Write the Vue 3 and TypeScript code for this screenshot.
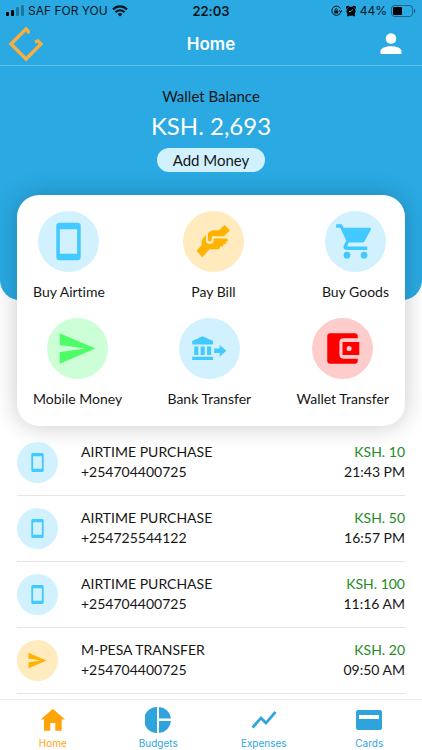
<script setup lang="ts">
type IconName = 'phone' | 'hands' | 'cart' | 'send' | 'bank' | 'wallet'
type Tone = 'blue' | 'amber' | 'green' | 'red'

interface Action {
  label: string
  icon: IconName
  tone: Tone
}

interface Transaction {
  id: number
  title: string
  phone: string
  amount: string
  time: string
  icon: IconName
  tone: Tone
}

interface Tab {
  label: string
  path: string
  active?: boolean
}

const actionRows: Action[][] = [
  [
    { label: 'Buy Airtime', icon: 'phone', tone: 'blue' },
    { label: 'Pay Bill', icon: 'hands', tone: 'amber' },
    { label: 'Buy Goods', icon: 'cart', tone: 'blue' },
  ],
  [
    { label: 'Mobile Money', icon: 'send', tone: 'green' },
    { label: 'Bank Transfer', icon: 'bank', tone: 'blue' },
    { label: 'Wallet Transfer', icon: 'wallet', tone: 'red' },
  ],
]

const transactions: Transaction[] = [
  { id: 1, title: 'AIRTIME PURCHASE', phone: '+254704400725', amount: 'KSH. 10', time: '21:43 PM', icon: 'phone', tone: 'blue' },
  { id: 2, title: 'AIRTIME PURCHASE', phone: '+254725544122', amount: 'KSH. 50', time: '16:57 PM', icon: 'phone', tone: 'blue' },
  { id: 3, title: 'AIRTIME PURCHASE', phone: '+254704400725', amount: 'KSH. 100', time: '11:16 AM', icon: 'phone', tone: 'blue' },
  { id: 4, title: 'M-PESA TRANSFER', phone: '+254704400725', amount: 'KSH. 20', time: '09:50 AM', icon: 'send', tone: 'amber' },
]

/* Glyphs share a 60 x 60 box centred in their disc. */
const glyphs: Record<IconName, string> = {
  phone:
    'M21 11.500H39A3 3 0 0 1 42 14.500V45.500A3 3 0 0 1 39 48.500H21A3 3 0 0 1 18 45.500V14.500A3 3 0 0 1 21 11.500ZM21.500 18V42H38.500V18Z',
  hands:
    'M24.500 22L28.500 19H35.500L41 13.800L46.200 19.300L40.300 24.800H28.300V28.500C28.300 30.200 24.500 30.200 24.500 28.500ZM22.500 23.300V29.500C22.500 33.300 30.200 33.300 30.200 29.500V27H43L44.300 28.500L43.500 30.200H42L42.500 31.500L41.500 32.700H39.500L39.800 34L38.800 35H36.500L36 36.800L34.500 37.500H26L19 45.500L13.400 39L18.400 33.500V28.500Z',
  cart:
    'M11 13H16.500L18.500 16.500H43.500C45 16.500 45.500 17.500 45 18.700L39 29.500C38.400 30.600 37.500 31 36.300 31H23.500L21.900 34.200C21.700 34.700 21.900 35 22.400 35H41.500V38.400H21.500C18.700 38.400 17.400 36 18.600 33.600L20.900 29.300L15 16.500H11ZM21.600 40.200A3.300 3.300 0 1 0 21.600 46.800A3.300 3.300 0 1 0 21.600 40.200ZM38.400 40.200A3.300 3.300 0 1 0 38.400 46.800A3.300 3.300 0 1 0 38.400 40.200Z',
  send: 'M12.500 15L47.500 30L12.500 45V33.500L38 30L12.500 26.500Z',
  bank:
    'M13 22.500L23.200 18L33.500 22.500V26H13ZM15 28H19V36.500H15ZM21.300 28H25.300V36.500H21.300ZM27.600 28H31.600V36.500H27.600ZM13 38H33.500V41.200H13ZM34.500 30H40V26.500L46.500 32.200L40 38V34.500H34.500Z',
  wallet:
    'M18 15H42A3 3 0 0 1 45 18V20H31A4 4 0 0 0 27 24V36A4 4 0 0 0 31 40H45V42A3 3 0 0 1 42 45H18A3 3 0 0 1 15 42V18A3 3 0 0 1 18 15ZM30 23.500H46.500V36.500H30ZM36.500 27.500A2.500 2.500 0 1 0 36.500 32.500A2.500 2.500 0 1 0 36.500 27.500Z',
}

const tabs: Tab[] = [
  { label: 'Home', path: 'M0.700 12.500L12.800 1.700L25 12.500H21.700V23.700H15.300V16H10.300V23.700H4V12.500Z', active: true },
  { label: 'Budgets', path: 'M12 0V26A13 13 0 0 1 12 0ZM14 0A13 13 0 0 1 26 11.500H14ZM14 14H26A13 13 0 0 1 14 26Z' },
  { label: 'Expenses', path: 'M2.500 21.500L0.500 19.500L10 9L15 14L23.500 4L25.500 6L15 18L10 13Z' },
  { label: 'Cards', path: 'M2 3H24A2 2 0 0 1 26 5V21A2 2 0 0 1 24 23H2A2 2 0 0 1 0 21V5A2 2 0 0 1 2 3ZM3 8V12H23V8Z' },
]
</script>

<template>
  <div class="app">
    <header class="top">
      <div class="status">
        <div class="status-side">
          <svg class="signal" width="18" height="12" viewBox="0 0 18 12" aria-hidden="true">
            <rect x="0" y="7" width="3" height="4" rx="1" />
            <rect x="5" y="5" width="3" height="6" rx="1" />
            <rect x="10" y="2" width="3" height="9" rx="1" opacity=".3" />
            <rect x="15" y="0" width="3" height="11" rx="1" opacity=".3" />
          </svg>
          <span>SAF FOR YOU</span>
          <svg width="16" height="12" viewBox="0 0 16 12" fill="none" stroke="#07151d" stroke-width="2.200" aria-hidden="true">
            <path d="M1 4.500C5 .3 11 .3 15 4.500M3.500 7.200C6 4.600 10 4.600 12.500 7.200" />
            <path d="M8 11.500L5.600 9C7 7.700 9 7.700 10.400 9Z" fill="#07151d" stroke="none" />
          </svg>
        </div>
        <time class="clock">22:03</time>
        <div class="status-side end">
          <svg width="11" height="12" viewBox="0 0 11 12" fill="none" stroke="#07151d" aria-hidden="true">
            <path d="M9.500 3.500A4.600 4.600 0 1 0 10 6.500M8 5.500L10 7L11 5" />
            <path d="M3.300 5.500H7.200V8.500H3.300Z" fill="#07151d" stroke="none" />
            <path d="M4.200 5.500V4.500C4.200 3.200 6.300 3.200 6.300 4.500V5.500" />
          </svg>
          <svg class="alarm" width="10" height="12" viewBox="0 0 10 12" aria-hidden="true">
            <circle cx="5" cy="6.300" r="4.500" />
            <path d="M0 4V1.500L2.500 .8L3.800 1.600ZM10 4V1.500L7.500 .8L6.200 1.600ZM1.500 9L.8 11.200H2.500L3.500 10ZM8.500 9L9.200 11.200H7.500L6.500 10Z" />
            <path d="M6.800 4.200L5 6.500H3" fill="none" stroke="#2aa9e3" />
          </svg>
          <span>44%</span>
          <svg width="25" height="12" viewBox="0 0 25 12" aria-hidden="true">
            <rect x=".5" y=".5" width="21" height="11" rx="3" fill="none" stroke="#07151d" opacity=".45" />
            <rect x="2" y="2" width="9" height="8" rx="1" />
            <path d="M23 4C24.700 4.500 24.700 7.500 23 8Z" opacity=".5" />
          </svg>
        </div>
      </div>
      <nav class="navbar" aria-label="Account">
        <a class="logo" href="#" aria-label="Start">
          <svg width="36" height="36" viewBox="0 0 36 36" fill="none" stroke="#f5b041" stroke-width="3.400" aria-hidden="true">
            <path d="M20.300 7.500V5.300L18 3L3 18L18 33L33 18L30 15L27 15.800" />
          </svg>
        </a>
        <h1>Home</h1>
        <button class="profile" type="button" aria-label="Profile">
          <svg width="22" height="22" viewBox="0 0 22 22" fill="#fff" aria-hidden="true">
            <circle cx="11" cy="5.500" r="5.300" />
            <path d="M.5 21V18.500C.5 11.500 21.500 11.500 21.500 18.500V21Z" />
          </svg>
        </button>
      </nav>
    </header>

    <main class="content">
      <section class="hero">
        <p class="caption">Wallet Balance</p>
        <p class="balance">KSH. 2,693</p>
        <button class="add" type="button">Add Money</button>
      </section>

      <section class="card" aria-label="Services">
        <div v-for="(row, index) in actionRows" :key="index" class="action-row">
          <button v-for="action in row" :key="action.label" class="action" type="button">
            <span class="disc" :class="action.tone">
              <svg viewBox="0 0 60 60" aria-hidden="true"><path :d="glyphs[action.icon]" /></svg>
            </span>
            <span>{{ action.label }}</span>
          </button>
        </div>
      </section>

      <ul class="list">
        <li v-for="item in transactions" :key="item.id" class="entry">
          <span class="disc small" :class="item.tone">
            <svg viewBox="0 0 60 60" aria-hidden="true"><path :d="glyphs[item.icon]" /></svg>
          </span>
          <div class="details">
            <p>{{ item.title }}</p>
            <p>{{ item.phone }}</p>
          </div>
          <div class="sum">
            <p class="amount">{{ item.amount }}</p>
            <p>{{ item.time }}</p>
          </div>
        </li>
      </ul>
    </main>

    <nav class="tabs" aria-label="Main">
      <a v-for="tab in tabs" :key="tab.label" href="#" class="tab" :class="{ active: tab.active }">
        <svg width="26" height="26" viewBox="0 0 26 26" fill-rule="evenodd" aria-hidden="true"><path :d="tab.path" /></svg>
        <span>{{ tab.label }}</span>
      </a>
    </nav>
  </div>
</template>

<style>
body {
  margin: 0;
  background: #fff;
}
</style>

<style scoped>
.app {
  display: flex;
  flex-direction: column;
  height: 100vh;
  overflow: hidden;
  color: #161616;
  font-family: Lato, "Liberation Sans", sans-serif;
  font-size: 14px;
  font-variant-ligatures: none;
  line-height: 20px;
}

p,
h1,
ul {
  margin: 0;
  padding: 0;
}

button {
  padding: 0;
  border: 0;
  background: none;
  color: inherit;
  font: inherit;
  cursor: pointer;
}

svg {
  display: block;
  flex: none;
}

.disc svg path {
  fill-rule: evenodd;
}

.top {
  flex: none;
  background: #2aa9e3;
  border-bottom: 1px solid #5fc0ec;
}

.status {
  display: grid;
  grid-template-columns: 1fr auto 1fr;
  align-items: center;
  height: 22px;
  padding: 0 6px;
  color: #07151d;
  font-family: Inter, "Liberation Sans", sans-serif;
  font-size: 12px;
}

.status-side {
  display: flex;
  align-items: center;
  gap: 4px;
}

.end {
  justify-content: flex-end;
}

.clock {
  font-size: 13px;
  font-weight: 600;
}

.navbar {
  display: grid;
  grid-template-columns: 1fr auto 1fr;
  align-items: center;
  height: 43px;
  padding: 0 20px 0 8px;
}

.logo {
  justify-self: start;
}

.navbar h1 {
  color: #fff;
  padding-left: 12px;
  font-family: Inter, "Liberation Sans", sans-serif;
  font-size: 17px;
  font-weight: 600;
}

.navbar h1,
.profile {
  justify-self: end;
}

.content {
  flex: 1;
  min-height: 0;
  overflow-y: auto;
  scrollbar-width: none;
}

.hero {
  display: flex;
  flex-direction: column;
  align-items: center;
  padding: 20px 16px 128px;
  border-radius: 0 0 20px 20px;
  background: #2aa9e3;
  font-size: 15px;
}

.balance {
  margin: 4px 0 6px;
  color: #fff;
  font-size: 24px;
  line-height: 32px;
}

.add {
  padding: 2px 16px;
  border-radius: 12px;
  background: #d1f1ff;
}

.card {
  display: flex;
  flex-direction: column;
  gap: 16px;
  margin: -105px 17px 0;
  padding: 16px 16px 17px;
  border-radius: 22px;
  background: #fff;
  box-shadow: 0 0 24px rgba(0, 0, 0, 0.22);
}

.action-row {
  display: flex;
  justify-content: space-between;
}

.action {
  display: flex;
  flex-direction: column;
  align-items: center;
  gap: 10px;
}

.disc {
  display: block;
  flex: none;
  width: 61px;
  height: 61px;
  border-radius: 50%;
}

.small {
  width: 41px;
  height: 41px;
}

.small svg {
  width: 31px;
  height: 31px;
  margin: 5px;
}

.blue {
  background: #d1f1ff;
  fill: #42c9ff;
}

.amber {
  background: #ffebbd;
  fill: #ffb300;
}

.green {
  background: #ccffd6;
  fill: #4dfc66;
}

.red {
  background: #ffcccc;
  fill: #ff0000;
}

.list {
  margin: 4px 17px 0;
  list-style: none;
}

.entry {
  display: flex;
  align-items: center;
  gap: 23px;
  height: 65px;
  border-bottom: 1px solid #e4e4e4;
}

.details,
.sum {
  padding-bottom: 1px;
}

.details {
  flex: 1;
}

.sum {
  text-align: right;
}

.amount {
  color: #228b22;
}

.tabs {
  display: grid;
  grid-template-columns: repeat(4, 1fr);
  flex: none;
  height: 50px;
  border-top: 1px solid #ececec;
  background: #fff;
}

.tab {
  display: flex;
  flex-direction: column;
  align-items: center;
  padding-top: 7px;
  color: #2fa4dc;
  fill: #2fa4dc;
  font-family: Inter, "Liberation Sans", sans-serif;
  font-size: 10px;
  line-height: 20px;
  text-decoration: none;
}

.active {
  color: #ffa50a;
  fill: #ffa50a;
}
</style>
